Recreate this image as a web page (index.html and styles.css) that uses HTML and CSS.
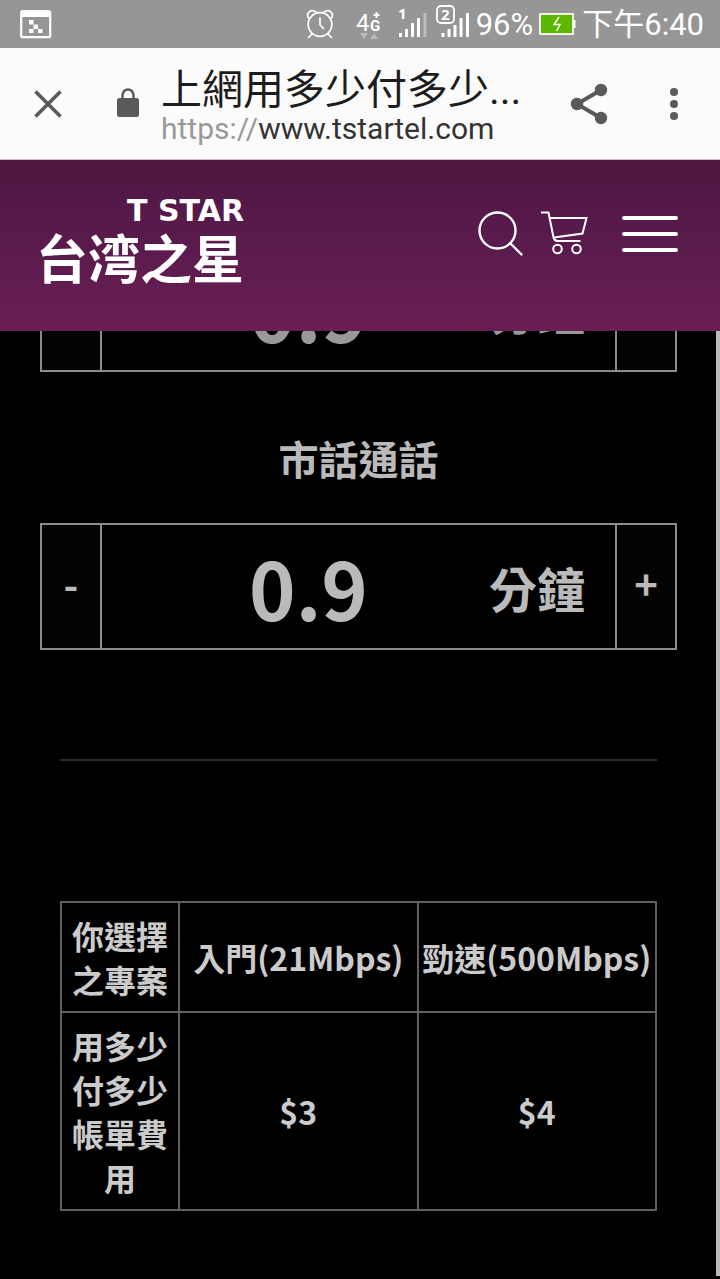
FILE: index.html
```html
<!DOCTYPE html>
<html lang="zh-Hant">
<head>
<meta charset="utf-8">
<meta name="viewport" content="width=device-width, initial-scale=1">
<title>上網用多少付多少</title>
<link rel="stylesheet" href="styles.css">
</head>
<body>
<div class="status-bar">
  <svg class="status-app" width="32" height="30" viewBox="0 0 32 30" aria-hidden="true">
    <rect x="1.2" y="2.2" width="29" height="26" rx="1.5" fill="none" stroke="#fff" stroke-width="2.2"/>
    <path d="M1 2h29.500v6H1zM9 11h4.500v4.500H9zM13.500 15.500H18V20h-4.500zM9 20h4.500v4H9zM18 20h4.500v4H18z" fill="#fff"/>
  </svg>
  <svg class="status-alarm" width="28" height="30" viewBox="0 0 28 30" fill="none" stroke="#fff" stroke-width="1.700" stroke-linecap="round" aria-hidden="true">
    <circle cx="14" cy="15.500" r="11.800"/>
    <path d="M14 9v7l3.500 3.500M6 25l-3.500 3.500M22 25l3.500 3.500M2.500 9C-.5 4 5-.5 10 3M25.500 9c3-5-2.500-9.500-7.500-6"/>
  </svg>
  <svg class="status-net" width="26" height="34" viewBox="0 0 26 34" aria-hidden="true">
    <text x="0" y="24" class="net-four">4</text>
    <text x="14" y="24" class="net-g">G</text>
    <path d="M20.500 5v6M17.500 8h6" stroke="#fff" stroke-width="2"/>
    <path d="M4 26h8l-4 6zM14 32h8l-4-6z" fill="#bdbdbd"/>
  </svg>
  <svg class="status-sim sim-one" width="29" height="36" viewBox="0 0 29 36" aria-hidden="true">
    <text x="0" y="15" class="sim-number">1</text>
    <path d="M2.500 33v-4M8.500 33v-8M14.500 33V19M20.500 33v-19" stroke="#fff" stroke-width="3"/>
    <path d="M27 33V9" stroke="#bdbdbd" stroke-width="3"/>
  </svg>
  <svg class="status-sim" width="34" height="36" viewBox="0 0 34 36" aria-hidden="true">
    <rect x="1" y="2" width="17" height="17" rx="4" fill="none" stroke="#fff" stroke-width="1.800"/>
    <text x="5" y="16" class="sim-number">2</text>
    <path d="M7 33v-4M13 33v-8M19 33V21M25 33V14M31.500 33V9" stroke="#fff" stroke-width="3"/>
  </svg>
  <span class="status-text">96%</span>
  <svg class="status-battery" width="37" height="24" viewBox="0 0 37 24" aria-hidden="true">
    <rect x="1" y="2" width="33" height="20" fill="#5bb700" stroke="#fff" stroke-width="1.800"/>
    <path d="M34 8h2.500v8H34z" fill="#fff"/>
    <path d="M20 5l-5 7.500h6L17.500 19" fill="none" stroke="#fff" stroke-width="1.500"/>
  </svg>
  <span class="status-text">下午6:40</span>
</div>

<div class="toolbar">
  <button class="icon-button" type="button" aria-label="關閉">
    <svg width="28" height="28" viewBox="0 0 28 28"><path d="M1.500 1.500l25 25M26.500 1.500l-25 25" stroke="#5a5a5a" stroke-width="3.600"/></svg>
  </button>
  <svg class="lock" width="22" height="30" viewBox="0 0 22 30" aria-hidden="true">
    <rect x="0" y="10" width="22" height="19" rx="2.500" fill="#5a5a5a"/>
    <path d="M5.500 11V7a5.500 5.500 0 0 1 11 0v4" fill="none" stroke="#5a5a5a" stroke-width="2.500"/>
  </svg>
  <div class="page-info">
    <div class="page-title">上網用多少付多少...</div>
    <div class="page-url"><span class="url-scheme">https://</span>www.tstartel.com</div>
  </div>
  <button class="icon-button share" type="button" aria-label="分享">
    <svg width="38" height="42" viewBox="0 0 38 42"><path d="M31 7L7 21l24 14" fill="none" stroke="#5a5a5a" stroke-width="4"/><g fill="#5a5a5a"><circle cx="31" cy="7" r="6.200"/><circle cx="7" cy="21" r="6.200"/><circle cx="31" cy="35" r="6.200"/></g></svg>
  </button>
  <button class="icon-button" type="button" aria-label="更多選項">
    <svg width="8" height="32" viewBox="0 0 8 32" fill="#5a5a5a"><circle cx="4" cy="4" r="4"/><circle cx="4" cy="16" r="4"/><circle cx="4" cy="28" r="4"/></svg>
  </button>
</div>

<header class="site-header">
  <a class="brand" href="#">
    <span class="brand-en">T STAR</span>
    <span class="brand-zh">台湾之星</span>
  </a>
  <nav class="site-nav">
    <button class="icon-button" type="button" aria-label="搜尋">
      <svg width="46" height="46" viewBox="0 0 46 46" fill="none" stroke="#fff" stroke-width="2.400" stroke-linecap="round"><circle cx="19.500" cy="19.500" r="18"/><path d="M32 32l11.500 11.500"/></svg>
    </button>
    <a class="icon-button cart" href="#" aria-label="購物車">
      <svg width="48" height="46" viewBox="0 0 48 46" fill="none" stroke="#fff" stroke-width="2"><path d="M0 1.500h7.500l5 25q1 3.500 4 3.500h23M8.500 7H45.500l-4 15.500-28.500 4"/><circle cx="16.500" cy="38" r="4.300"/><circle cx="35.500" cy="38" r="4.300"/></svg>
    </a>
    <button class="icon-button" type="button" aria-label="選單">
      <svg width="56" height="38" viewBox="0 0 56 38" stroke="#fff" stroke-width="4" stroke-linecap="round"><path d="M2 3h52M2 19h52M2 35h52"/></svg>
    </button>
  </nav>
</header>

<main class="content">
  <div class="stepper stepper-scrolled">
    <button class="step" type="button" aria-label="減少">-</button>
    <div class="amount">
      <input class="amount-value" type="text" value="0.9" aria-label="通話分鐘">
      <span class="amount-unit">分鐘</span>
    </div>
    <button class="step" type="button" aria-label="增加">+</button>
  </div>

  <label class="field-title" for="local-call">市話通話</label>
  <div class="stepper">
    <button class="step" type="button" aria-label="減少市話通話">-</button>
    <div class="amount">
      <input class="amount-value" id="local-call" type="text" value="0.9">
      <span class="amount-unit">分鐘</span>
    </div>
    <button class="step" type="button" aria-label="增加市話通話">+</button>
  </div>

  <hr class="divider">

  <table class="plans">
    <tr>
      <th class="plan-label" scope="row">你選擇之專案</th>
      <th scope="col">入門(21Mbps)</th>
      <th scope="col">勁速(500Mbps)</th>
    </tr>
    <tr>
      <th class="plan-label" scope="row">用多少付多少帳單費用</th>
      <td>$3</td>
      <td>$4</td>
    </tr>
  </table>
</main>
</body>
</html>
```
FILE: styles.css
```css
* {
  box-sizing: border-box;
}

body {
  margin: 0;
  background: #000;
  font-family: "Noto Sans CJK TC", sans-serif;
}

.status-bar {
  display: flex;
  align-items: center;
  height: 48px;
  padding: 0 16px 0 20px;
  background: #969696;
  color: #fff;
}

.status-app {
  margin-right: auto;
}

.status-alarm {
  margin-right: 22px;
}

.status-net {
  margin-right: 16px;
}

.status-sim {
  margin: 0 6px 4px 0;
}

.sim-one {
  margin-right: 9px;
}

.status-battery {
  margin: 0 6px;
}

.status-text {
  padding-top: 2px;
  font: 31px/46px Roboto, "Noto Sans CJK TC", sans-serif;
  white-space: nowrap;
}

.net-four {
  font: 24px Roboto, sans-serif;
  fill: #fff;
}

.net-g {
  font: bold 15px Roboto, sans-serif;
  fill: #fff;
}

.sim-number {
  font: bold 15px "Noto Sans", sans-serif;
  fill: #fff;
}

.toolbar {
  display: flex;
  align-items: center;
  height: 112px;
  padding: 0 42px 0 34px;
  background: #fbfbfb;
  border-bottom: 1px solid #d3b8cc;
}

.icon-button {
  display: flex;
  padding: 0;
  border: 0;
  background: none;
  cursor: pointer;
}

.lock {
  margin: 0 22px 2px 55px;
}

.page-info {
  flex: 1;
  min-width: 0;
  padding-top: 4px;
  white-space: nowrap;
}

.page-title {
  color: #1c1c1c;
  font: 41px/46px Roboto, "Noto Sans CJK TC", sans-serif;
}

.page-url {
  color: #333;
  font: 30px/32px Roboto, sans-serif;
}

.url-scheme {
  color: #999;
}

.share {
  margin-right: 62px;
}

.site-header {
  display: flex;
  justify-content: space-between;
  height: 171px;
  padding: 34px 42px 0 36px;
  background: linear-gradient(#4f173f, #55194a 30%, #691e54);
}

.brand {
  display: flex;
  flex-direction: column;
  align-items: flex-end;
  color: #fff;
  text-decoration: none;
}

.brand-en {
  font: bold 30px/34px "DejaVu Sans", sans-serif;
}

.brand-zh {
  font: bold 52px/58px "Noto Sans CJK TC", sans-serif;
}

.site-nav {
  display: flex;
  align-items: center;
  height: 80px;
}

.cart {
  margin: 0 33px 0 17px;
}

.content {
  overflow: hidden;
  padding: 0 39px 65px 40px;
  border-right: 4px solid #bcbaba;
  color: #bababa;
}

.stepper {
  display: flex;
  height: 127px;
  border: 2px solid #8c8c8c;
}

/* partly scrolled out of view under the site header */
.stepper-scrolled {
  margin-top: -86px;
  color: #999;
}

.step {
  width: 58px;
  padding: 0 0 8px;
  border: 0;
  background: #030303;
  color: inherit;
  font: bold 40px/48px "Noto Sans CJK TC", sans-serif;
  cursor: pointer;
}

.amount {
  display: flex;
  flex: 1;
  align-items: center;
  min-width: 0;
  padding: 0 30px 0 26px;
  border: solid #8c8c8c;
  border-width: 0 2px;
}

.amount-value {
  flex: 1;
  min-width: 0;
  height: 116px;
  padding: 0;
  border: 0;
  background: none;
  color: inherit;
  font: bold 79px/116px "Noto Sans CJK TC", sans-serif;
  text-align: center;
}

.amount-unit {
  font-size: 48px;
  font-weight: bold;
}

.field-title {
  display: block;
  padding: 56px 0 34px;
  font-size: 40px;
  font-weight: bold;
  line-height: 61px;
  text-align: center;
}

.divider {
  height: 2px;
  margin: 109px 20px 140px;
  border: 0;
  background: #2c2c2c;
}

.plans {
  width: calc(100% - 40px);
  margin: 0 20px;
  border-collapse: collapse;
  table-layout: fixed;
  color: #cbcbcb;
  font-size: 32px;
  line-height: 44px;
  text-align: center;
}

.plans th,
.plans td {
  padding: 10px 2px;
  border: 2px solid #606060;
  font-weight: bold;
}

.plans .plan-label {
  width: 118px;
  padding: 10px;
}
```
